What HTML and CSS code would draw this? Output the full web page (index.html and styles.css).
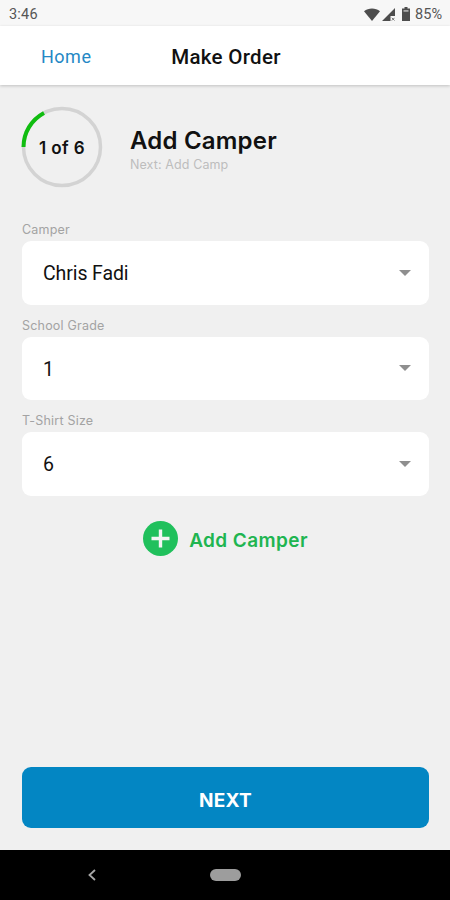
FILE: index.html
```
<!DOCTYPE html>
<html lang="en">
<head>
    <meta charset="UTF-8">
    <meta name="viewport" content="width=device-width, initial-scale=1.0">
    <title>Make Order</title>
    <link rel="stylesheet" href="styles.css">
</head>
<body>
    <div class="status-bar">
        <span class="time">3:46</span>
        <div class="status-icons">
            <svg class="wifi" width="16" height="13" viewBox="0 0 16 13">
                <path d="M0 3.2C4.500-.4 11.500-.4 16 3.200L8 13z" fill="#4d4d4d"/>
            </svg>
            <svg class="signal" width="13" height="13" viewBox="0 0 13 13">
                <path d="M13 0v8H8.500v5H0z" fill="#4d4d4d"/>
                <path d="M9.800 9.800l2.700 2.700M12.500 9.800L9.800 12.500" stroke="#777" stroke-width="1"/>
            </svg>
            <svg class="battery" width="8" height="14" viewBox="0 0 8 14">
                <path d="M2.500 0h3v1.500H8V14H0V1.500h2.500z" fill="#4d4d4d"/>
                <path d="M1.500 3h5v1.800h-5z" fill="#aaa"/>
            </svg>
            <span>85%</span>
        </div>
    </div>

    <header class="navbar">
        <a class="navbar-back">Home</a>
        <h1 class="navbar-title">Make Order</h1>
    </header>

    <main>
        <section class="step">
            <div class="progress">
                <svg width="82" height="82" viewBox="0 0 82 82">
                    <circle cx="41" cy="41" r="38.500" fill="none" stroke="#d3d3d3" stroke-width="3.500"/>
                    <path d="M2.500 41A38.500 38.500 0 0 1 23 6.950" fill="none" stroke="#10bd10" stroke-width="4"/>
                </svg>
                <span class="progress-text">1 of 6</span>
            </div>
            <div class="step-text">
                <h2>Add Camper</h2>
                <p>Next: Add Camp</p>
            </div>
        </section>

        <form class="fields">
            <div class="field">
                <label>Camper</label>
                <div class="select">
                    <span>Chris Fadi</span>
                    <svg width="12" height="6" viewBox="0 0 12 6"><path d="M0 0h12L6 6z" fill="#8f8f8f"/></svg>
                </div>
            </div>
            <div class="field">
                <label>School Grade</label>
                <div class="select">
                    <span>1</span>
                    <svg width="12" height="6" viewBox="0 0 12 6"><path d="M0 0h12L6 6z" fill="#8f8f8f"/></svg>
                </div>
            </div>
            <div class="field">
                <label>T-Shirt Size</label>
                <div class="select">
                    <span>6</span>
                    <svg width="12" height="6" viewBox="0 0 12 6"><path d="M0 0h12L6 6z" fill="#8f8f8f"/></svg>
                </div>
            </div>
        </form>

        <div class="add">
            <svg width="35" height="35" viewBox="0 0 35 35">
                <circle cx="17.500" cy="17.500" r="17.500" fill="#20c05c"/>
                <path d="M17.500 8.500v18M8.500 17.500h18" stroke="#f4f4f4" stroke-width="3.400"/>
            </svg>
            <span>Add Camper</span>
        </div>

        <button class="next">NEXT</button>
    </main>

    <footer class="system-nav">
        <svg class="back" width="8" height="12" viewBox="0 0 8 12">
            <path d="M7 1L1.500 6 7 11" fill="none" stroke="#a8a8a8" stroke-width="1.800"/>
        </svg>
        <span class="home-pill"></span>
    </footer>
</body>
</html>
```
FILE: styles.css
```
* {
    box-sizing: border-box;
}

body {
    display: flex;
    flex-direction: column;
    margin: 0;
    height: 900px;
    overflow: hidden;
    background-color: #f0f0f0;
    font-family: Roboto, sans-serif;
    color: #111;
}

h1, h2, p {
    margin: 0;
}

svg {
    display: block;
    flex: none;
}

/* Status bar */
.status-bar {
    display: flex;
    justify-content: space-between;
    align-items: center;
    height: 26px;
    padding: 2px 8px 0 9px;
    background-color: #f7f7f7;
    font-size: 14.5px;
    color: #555;
}

.time {
    letter-spacing: 0.2px;
}

.status-icons {
    display: flex;
    align-items: center;
}

.signal {
    margin-left: 2px;
}

.battery {
    margin: 0 5px 0 7px;
}

/* Navbar */
.navbar {
    display: grid;
    grid-template-columns: 131px 1fr 129px;
    align-items: center;
    height: 59px;
    padding-top: 2px;
    background-color: #fff;
    box-shadow: 0 1px 3px rgba(0, 0, 0, 0.2);
}

.navbar-back {
    padding-left: 41px;
    font-size: 18px;
    letter-spacing: 0.5px;
    color: #2488c5;
}

.navbar-title {
    text-align: center;
    font-size: 20.5px;
    font-weight: 500;
    letter-spacing: 0.3px;
}

main {
    display: flex;
    flex: 1;
    flex-direction: column;
    padding: 21px 21px 22px 22px;
}

/* Current step */
.step {
    display: flex;
    align-items: center;
    gap: 27px;
    margin-left: -1px;
    font-family: Inter, sans-serif;
}

.progress {
    display: grid;
    place-items: center;
}

.progress > * {
    grid-area: 1 / 1;
}

.progress-text {
    padding-top: 2px;
    font-size: 17px;
    font-weight: 600;
    letter-spacing: 0.4px;
}

.step-text {
    padding-top: 6px;
}

.step h2 {
    font-size: 24px;
    line-height: 30px;
    font-weight: 600;
    letter-spacing: 0.2px;
}

.step p {
    font-size: 12.5px;
    line-height: 18px;
    letter-spacing: 0.1px;
    color: #bdbdbd;
}

/* Fields */
.fields {
    display: flex;
    flex-direction: column;
    gap: 11px;
    margin-top: 32px;
}

.field label {
    display: block;
    height: 21px;
    line-height: 20px;
    font-family: Inter, sans-serif;
    font-size: 12.5px;
    letter-spacing: 0.2px;
    color: #a3a3a3;
}

.select {
    display: flex;
    justify-content: space-between;
    align-items: center;
    height: 63.5px;
    padding: 0 18px 0 21px;
    border-radius: 9px;
    background-color: #fff;
    font-size: 19.5px;
    letter-spacing: -0.1px;
}

.select span {
    padding-top: 2px;
}

/* Add camper */
.add {
    display: flex;
    justify-content: center;
    align-items: center;
    gap: 11px;
    margin-top: 25px;
    font-family: Inter, sans-serif;
    font-size: 19px;
    font-weight: 600;
    letter-spacing: 0.4px;
    color: #20b550;
}

.add span {
    padding-top: 4px;
}

.next {
    height: 61px;
    margin-top: auto;
    padding: 5px 0 0;
    border: none;
    border-radius: 9px;
    background-color: #0386c3;
    font-family: Inter, sans-serif;
    font-size: 19px;
    font-weight: 700;
    letter-spacing: 0.2px;
    color: #fff;
}

/* System navigation */
.system-nav {
    display: grid;
    grid-template-columns: 1fr 31px 1fr;
    align-items: center;
    height: 50px;
    background-color: #000;
}

.back {
    margin-left: 88px;
}

.home-pill {
    height: 12px;
    border-radius: 6px;
    background-color: #9d9d9d;
}
```
